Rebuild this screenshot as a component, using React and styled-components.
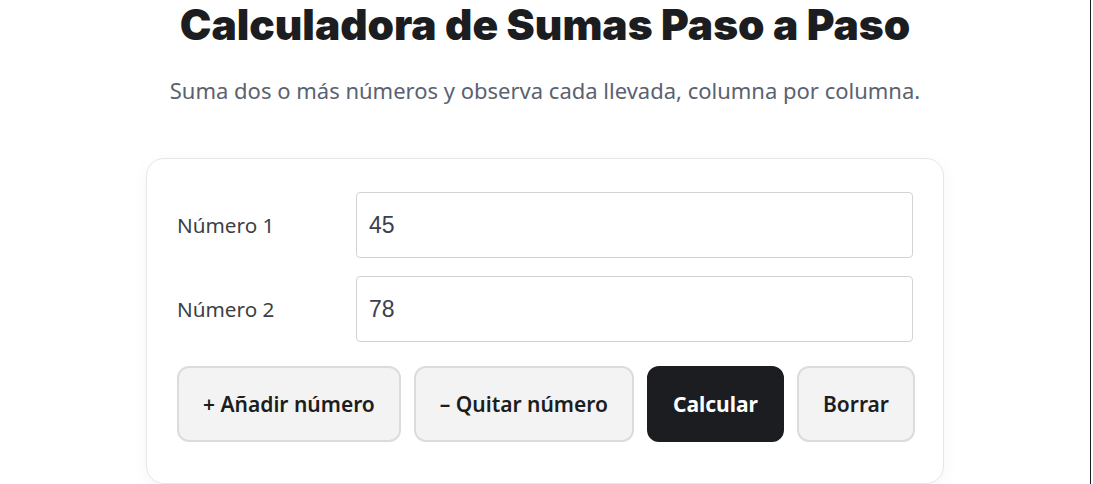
import React, { useState } from "react";
import styled, { createGlobalStyle } from "styled-components";

const GlobalStyle = createGlobalStyle`
  body {
    margin: 0;
    background: #ffffff;
    font-family: "Noto Sans", "Open Sans", sans-serif;
    color: #1c1d20;
  }
`;

const Page = styled.div`
  box-sizing: border-box;
  width: 1091px;
  min-height: 484px;
  border-right: 1px solid #1c1d20;
  display: flex;
  flex-direction: column;
  align-items: center;
`;

const Title = styled.h1`
  margin: 0;
  font-family: "Inter", sans-serif;
  font-weight: 900;
  font-size: 42.4px;
  line-height: 50px;
  color: #1c1d20;
`;

const Subtitle = styled.p`
  margin: 25px 0 0;
  font-size: 22px;
  line-height: 30px;
  color: #5b6270;
`;

const Card = styled.section`
  box-sizing: border-box;
  width: 798px;
  margin-top: 53px;
  padding: 33px 30px 41px;
  background: #ffffff;
  border: 1px solid #e6e6e6;
  border-radius: 18px;
  box-shadow: 0 4px 18px rgba(0, 0, 0, 0.04);
  display: flex;
  flex-direction: column;
  gap: 18px;
`;

const Row = styled.label`
  display: grid;
  grid-template-columns: 179px 1fr;
  align-items: center;
`;

const LabelText = styled.span`
  font-size: 20.7px;
  color: #3c3f45;
`;

const NumberInput = styled.input`
  box-sizing: border-box;
  height: 66px;
  width: 100%;
  padding: 0 12px;
  border: 1px solid #d3d3d3;
  border-radius: 4px;
  font-family: "Liberation Sans", Arial, sans-serif;
  font-size: 23px;
  color: #3a404c;
  outline: none;
`;

const Actions = styled.div`
  display: flex;
  gap: 13px;
  margin-top: 6px;
`;

const Button = styled.button`
  box-sizing: border-box;
  height: 76px;
  padding: 0 24px;
  border-radius: 12px;
  border: 2px solid ${(p) => (p.$primary ? "#1c1d20" : "#dcdcdc")};
  background: ${(p) => (p.$primary ? "#1c1d20" : "#f3f3f3")};
  color: ${(p) => (p.$primary ? "#ffffff" : "#1c1d20")};
  font-family: "Noto Sans", "Open Sans", sans-serif;
  font-size: 21px;
  font-weight: ${(p) => (p.$primary ? 700 : 600)};
  cursor: pointer;
  white-space: nowrap;
`;

export default function App() {
  const [values, setValues] = useState(["45", "78"]);

  const update = (i, v) =>
    setValues((prev) => prev.map((x, j) => (j === i ? v : x)));

  return (
    <>
      <GlobalStyle />
      <Page>
        <Title>Calculadora de Sumas Paso a Paso</Title>
        <Subtitle>
          Suma dos o más números y observa cada llevada, columna por columna.
        </Subtitle>
        <Card>
          {values.map((v, i) => (
            <Row key={i}>
              <LabelText>Número {i + 1}</LabelText>
              <NumberInput value={v} onChange={(e) => update(i, e.target.value)} />
            </Row>
          ))}
          <Actions>
            <Button onClick={() => setValues((p) => [...p, ""])}>
              + Añadir número
            </Button>
            <Button onClick={() => setValues((p) => (p.length > 2 ? p.slice(0, -1) : p))}>
              – Quitar número
            </Button>
            <Button $primary>Calcular</Button>
            <Button onClick={() => setValues(["", ""])}>Borrar</Button>
          </Actions>
        </Card>
      </Page>
    </>
  );
}
